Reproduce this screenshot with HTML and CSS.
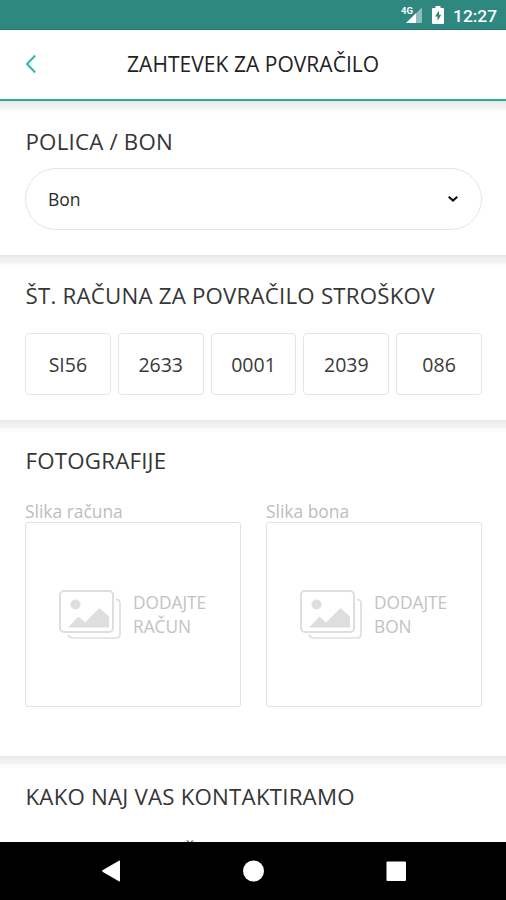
FILE: index.html
```html
<!DOCTYPE html>
<html lang="sl">
<head>
<meta charset="utf-8">
<title>Zahtevek za povračilo</title>
<link rel="stylesheet" href="styles.css">
</head>
<body>
<div class="phone">
  <div class="status">
    <svg class="signal" width="24" height="20" viewBox="0 0 24 20">
      <path d="M22 2.500V18H6z" fill="#8fbfba"/>
      <path d="M16 8.300V18H6z" fill="#fff"/>
      <text class="network" x="1" y="9">4G</text>
    </svg>
    <svg class="battery" width="12" height="18" viewBox="0 0 12 18">
      <path d="M3.500 0h5v2H11q1 0 1 1v14q0 1-1 1H1q-1 0-1-1V3q0-1 1-1h2.500z" fill="#fff"/>
      <path d="M7 4.500 3 10.500h2.500V15L9.300 8.800H7z" fill="#2f887f"/>
    </svg>
    <span class="clock">12:27</span>
  </div>
  <header class="header">
    <svg class="back" width="12" height="20" viewBox="0 0 12 20"><path d="M11.200 1.500 3 10l8.200 8.500" fill="none" stroke="#2bb5aa" stroke-width="1.900"/></svg>
    <h1 class="title">ZAHTEVEK ZA POVRAČILO</h1>
  </header>
  <main class="content">
    <section class="card policy">
      <h2 class="heading">POLICA / BON</h2>
      <div class="select"><span>Bon</span>
        <svg width="12" height="8" viewBox="0 0 12 8"><path d="M1.700 1.700 6 5.600l4.300-3.900" fill="none" stroke="#111" stroke-width="2.100"/></svg>
      </div>
    </section>
    <section class="card account">
      <h2 class="heading">ŠT. RAČUNA ZA POVRAČILO STROŠKOV</h2>
      <div class="numbers">
        <span class="number">SI56</span><span class="number">2633</span><span class="number">0001</span><span class="number">2039</span><span class="number">086</span>
      </div>
    </section>
    <section class="card photos">
      <h2 class="heading">FOTOGRAFIJE</h2>
      <div class="uploads">
        <div class="upload">
          <span class="label">Slika računa</span>
          <div class="drop">
            <svg width="62" height="50" viewBox="0 0 62 50"><rect x="1" y="1" width="53" height="41" rx="4" fill="none" stroke="#dedede" stroke-width="2"/><path d="M57 9.500q4 0 4 4V44q0 4-4 4H14q-3 0-5-3" fill="none" stroke="#dedede" stroke-width="1.700"/><circle cx="16.500" cy="14.500" r="5" fill="#dedede"/><path d="M9 37.500 19.500 26.500 26 32.500 40.500 18l9.500 8.500v11z" fill="#dedede"/></svg>
            <span class="add">DODAJTE<br>RAČUN</span>
          </div>
        </div>
        <div class="upload">
          <span class="label">Slika bona</span>
          <div class="drop">
            <svg width="62" height="50" viewBox="0 0 62 50"><rect x="1" y="1" width="53" height="41" rx="4" fill="none" stroke="#dedede" stroke-width="2"/><path d="M57 9.500q4 0 4 4V44q0 4-4 4H14q-3 0-5-3" fill="none" stroke="#dedede" stroke-width="1.700"/><circle cx="16.500" cy="14.500" r="5" fill="#dedede"/><path d="M9 37.500 19.500 26.500 26 32.500 40.500 18l9.500 8.500v11z" fill="#dedede"/></svg>
            <span class="add">DODAJTE<br>BON</span>
          </div>
        </div>
      </div>
    </section>
    <section class="card contact">
      <h2 class="heading">KAKO NAJ VAS KONTAKTIRAMO</h2>
      <svg class="peek" width="8" height="2" viewBox="0 0 8 2"><path d="M0 .5h2.500L3.500 2h-2zM5.500.5H8L6.500 2h-2z" fill="#777"/></svg>
    </section>
  </main>
  <nav class="nav">
    <svg width="506" height="58" viewBox="0 0 506 58"><path d="M120 19v20q0 .8-.7.4L102.500 29.700q-.8-.7 0-1.400L119.300 18.600q.7-.4.7.4z" fill="#fff"/><circle cx="253.500" cy="29" r="10.500" fill="#fff"/><rect x="386.500" y="19.500" width="19.500" height="19.500" rx="1" fill="#fff"/></svg>
  </nav>
</div>
</body>
</html>
```
FILE: styles.css
```css
* { box-sizing: border-box; }
body { margin: 0; background: #fff; font-family: "Open Sans", sans-serif; color: #2b2b2b; }
svg { display: block; flex: none; }
.phone { width: 506px; height: 900px; overflow: hidden; display: flex; flex-direction: column; }
.status { height: 30px; flex: none; background: #2f887f; border-bottom: 1px solid #2a7a72; display: flex; align-items: center; justify-content: flex-end; padding-right: 9px; color: #fff; }
.signal { margin: 1px 8px 0 0; overflow: visible; }
.network { font: 700 9.5px Roboto, sans-serif; fill: #fff; }
.battery { margin-right: 9px; }
.clock { width: 44px; font: 500 17.4px/30px Roboto, sans-serif; white-space: nowrap; padding-top: 2px; }
.header { height: 71px; flex: none; border-bottom: 2px solid #2aa99f; display: flex; align-items: center; padding: 0 0 2px 24px; }
.back { margin-top: 1px; }
.title { margin: 0 0 0 91px; font-size: 21px; font-weight: 400; line-height: 30px; letter-spacing: .04px; white-space: nowrap; color: #222; }
.content { flex: 1; min-height: 0; overflow: hidden; }
.card { padding: 25px 24px 0 25px; background: linear-gradient(#e6e6e6, #f1f1f1 4px, #f4f4f4 8px, #fcfcfc 9px, #fff 14px); }
.policy { height: 154px; }
.account { height: 165px; }
.photos { height: 336px; }
.contact { height: 86px; }
.heading { margin: 0; padding-left: .5px; font-size: 22.3px; font-weight: 500; line-height: 31px; height: 30px; letter-spacing: .2px; color: #363636; white-space: nowrap; }
.select { margin-top: 12px; height: 62px; border: 1.5px solid #e5e5e5; border-radius: 31px; display: flex; align-items: center; justify-content: space-between; padding: 0 22px; font-size: 17.5px; }
.select span { padding-bottom: 1px; }
.numbers { margin-top: 23px; display: grid; grid-template-columns: repeat(5, 1fr); gap: 7px; }
.number { height: 62px; border: 1.5px solid #e5e5e5; border-radius: 4px; display: flex; align-items: center; justify-content: center; font-size: 19.5px; color: #3a3a3a; }
.uploads { margin-top: 24px; display: grid; grid-template-columns: 1fr 1fr; gap: 25px; }
.label { display: block; height: 23px; font-size: 17.4px; line-height: 24px; color: #bdbdbd; white-space: nowrap; }
.drop { height: 185px; border: 1.5px solid #e2e2e2; border-radius: 3px; display: flex; align-items: center; padding-left: 33px; gap: 12px; }
.add { font-size: 17.3px; line-height: 24px; color: #c2c2c2; white-space: nowrap; }
.peek { margin: 29px 0 0 161px; }
.nav { height: 58px; flex: none; background: #000; }
```
